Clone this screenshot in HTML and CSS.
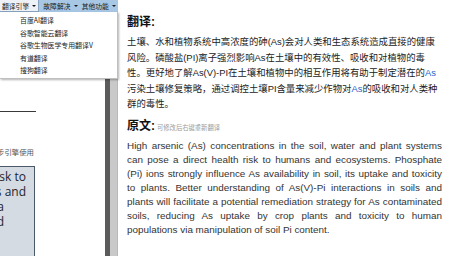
FILE: index.html
```html
<!DOCTYPE html>
<html lang="zh-CN">
<head>
<meta charset="utf-8">
<title>翻译</title>
<link rel="stylesheet" href="styles.css">
</head>
<body>
<div class="app">
  <section class="page">
    <div class="page-inner">
      <div class="rule"></div>
      <p class="caption">可供同步引擎使用</p>
      <div class="quote">
        <div class="q-line">a direct health risk to</div>
        <div class="q-line">humans and</div>
        <div class="q-line short">ecosystems via a</div>
        <div class="q-line short">and</div>
      </div>
    </div>
  </section>
  <div class="splitter"></div>
  <div class="gutter"></div>
  <main class="panel">
    <h2 class="title">翻译:</h2>
    <div class="cn">
      <span class="ln">土壤、水和植物系统中高浓度的砷(As)会对人类和生态系统造成直接的健康</span>
      <span class="ln">风险。磷酸盐(PI)离子强烈影响As在土壤中的有效性、吸收和对植物的毒</span>
      <span class="ln">性。更好地了解As(V)-PI在土壤和植物中的相互作用将有助于制定潜在的<em class="hl">As</em></span>
      <span class="ln">污染土壤修复策略，通过调控土壤PI含量来减少作物对<em class="hl">As</em>的吸收和对人类种</span>
      <span class="ln">群的毒性。</span>
    </div>
    <div class="src-head">
      <h2 class="title">原文:</h2>
      <span class="note">可修改后右键重新翻译</span>
    </div>
    <div class="en">
      <span class="ln">High arsenic (As) concentrations in the soil, water and plant systems</span>
      <span class="ln">can pose a direct health risk to humans and ecosystems. Phosphate</span>
      <span class="ln">(Pi) ions strongly influence As availability in soil, its uptake and toxicity</span>
      <span class="ln">to plants. Better understanding of As(V)-Pi interactions in soils and</span>
      <span class="ln">plants will facilitate a potential remediation strategy for As contaminated</span>
      <span class="ln">soils, reducing As uptake by crop plants and toxicity to human</span>
      <span class="ln">populations via manipulation of soil Pi content.</span>
    </div>
  </main>
</div>

<nav class="menubar">
  <div class="menu-item active"><span>翻译引擎</span><i class="caret"></i></div>
  <div class="menu-item"><span>故障解决</span><i class="caret"></i></div>
  <div class="menu-item"><span>其他功能</span><i class="caret"></i></div>
</nav>
<ul class="dropdown">
  <li>百度AI翻译</li>
  <li>谷歌智能云翻译</li>
  <li>谷歌生物医学专用翻译V</li>
  <li>有道翻译</li>
  <li>搜狗翻译</li>
</ul>
</body>
</html>
```
FILE: styles.css
```css
* { box-sizing: border-box; }
html, body {
  margin: 0;
  padding: 0;
  width: 450px;
  height: 256px;
  overflow: hidden;
  background: #fff;
  font-family: "Liberation Sans", "Noto Sans CJK SC", sans-serif;
}
body { position: relative; }

.app {
  display: flex;
  width: 450px;
  height: 256px;
}

/* left document page */
.page {
  width: 105px;
  flex: none;
  background: #fff;
  overflow: hidden;
}
.page-inner {
  width: 36px;
  height: 256px;
  display: flex;
  flex-direction: column;
  padding-top: 111px;
}
.rule {
  height: 1px;
  background: #3a3a3a;
  flex: none;
}
.caption {
  margin: 35px 0 0 -60px;
  width: 95px;
  font-size: 7.4px;
  line-height: 10px;
  height: 10px;
  color: #555;
  white-space: nowrap;
  text-align: right;
  padding-right: 1px;
  font-family: "Noto Sans CJK SC", sans-serif;
}
.quote {
  margin: 9px 0 0 -205px;
  width: 240px;
  flex: 1;
  background: #d4dbe2;
  border: 1px solid #4a5868;
  border-bottom: none;
  padding-top: 2px;
  font-family: "Open Sans", "Liberation Sans", sans-serif;
  font-size: 12px;
  line-height: 15px;
  color: #1e2530;
}
.q-line {
  text-align: right;
  padding-right: 8px;
  white-space: nowrap;
}
.q-line.short { padding-right: 30px; }

.splitter {
  width: 5px;
  flex: none;
  background: #5b5b5b;
}
.gutter {
  width: 7px;
  flex: none;
  background: #c9c9c9;
}

/* right translation panel */
.panel {
  flex: 1;
  background: #fff;
  border-left: 1px solid #b9b9b9;
  padding: 14px 8px 0 9px;
  color: #222;
}
.title {
  margin: 0;
  font-size: 12px;
  line-height: 16px;
  font-weight: bold;
  color: #111;
}
.cn {
  margin-top: 4px;
  font-size: 9.4px;
  line-height: 15.5px;
  color: #222;
}
.ln {
  display: block;
  white-space: nowrap;
}
.hl {
  font-style: normal;
  color: #1f5fcf;
}
.src-head {
  margin-top: 6.5px;
  display: flex;
  align-items: baseline;
  gap: 2px;
}
.note {
  font-size: 6.3px;
  color: #9a9a9a;
  font-family: "Noto Sans CJK SC", sans-serif;
}
.en {
  margin-top: 5px;
  font-size: 9.9px;
  line-height: 14px;
  color: #333;
}
.en .ln {
  text-align: justify;
  text-align-last: justify;
}
.en .ln:last-child { text-align-last: left; }

/* menu overlay */
.menubar {
  position: absolute;
  top: 0;
  left: 0;
  width: 118px;
  height: 12px;
  display: flex;
  background: #a7c7e5;
  font-family: "Noto Sans CJK SC", sans-serif;
  font-size: 6.8px;
  color: #1a1a1a;
}
.menu-item {
  flex: 1;
  display: flex;
  align-items: center;
  justify-content: space-between;
  padding: 0 2px 0 2px;
  height: 12px;
  line-height: 12px;
}
.menu-item.active {
  background: #eef2f6;
  border: 1px solid #87a3c1;
  border-top: none;
  border-left: none;
  margin-right: 2px;
}
.caret {
  width: 0;
  height: 0;
  border-left: 2px solid transparent;
  border-right: 2px solid transparent;
  border-top: 2.5px solid #1a1a1a;
}
.dropdown {
  position: absolute;
  top: 12px;
  left: 0;
  width: 118px;
  margin: 0;
  padding: 2px 0 1px 0;
  list-style: none;
  background: #fff;
  border-right: 1px solid #bfbfbf;
  border-bottom: 1px solid #bfbfbf;
  box-shadow: 1px 1px 2px rgba(0, 0, 0, 0.3);
  font-family: "Noto Sans CJK SC", sans-serif;
  font-size: 6.9px;
  color: #222;
}
.dropdown li {
  height: 12.6px;
  line-height: 12.6px;
  padding-left: 20px;
  white-space: nowrap;
}
```
